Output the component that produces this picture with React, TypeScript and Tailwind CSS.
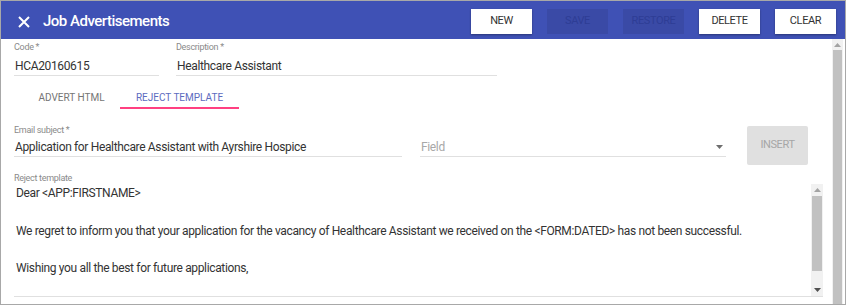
import React from "react";

function HeaderButton({ label, disabled }: { label: string; disabled?: boolean }) {
  return disabled ? (
    <div className="flex h-[25px] w-[61px] items-center justify-center bg-[#3a4aa6] text-[11px] tracking-[-0.4px] text-[#2e3d95]">
      {label}
    </div>
  ) : (
    <div className="flex h-[25px] w-[61px] items-center justify-center bg-white text-[11px] tracking-[-0.4px] text-[#333] shadow-[0_1px_2px_rgba(0,0,0,0.35)]">
      {label}
    </div>
  );
}

function ScrollArrow({ up }: { up?: boolean }) {
  return (
    <svg width="7" height="4" viewBox="0 0 7 4" className="block">
      {up ? <polygon points="0,4 7,4 3.5,0" fill="#a3a3a3" /> : <polygon points="0,0 7,0 3.5,4" fill="#505050" />}
    </svg>
  );
}

const label = "text-[9px] leading-[11px] tracking-[-0.3px] text-[#8a8a8a]";
const value = "text-[12px] leading-[18px] tracking-[-0.35px] text-[#333]";

export default function App() {
  return (
    <div
      className="flex h-[305px] w-[846px] flex-col overflow-hidden border border-[#a8a8a8] bg-white"
      style={{ fontFamily: "Roboto, 'Liberation Sans', sans-serif" }}
    >
      {/* Header */}
      <div className="flex h-[38px] shrink-0 items-start bg-[#3f51b5] pl-[16px] pr-[9px]">
        <svg width="12" height="12" viewBox="0 0 12 12" className="mt-[15px] ml-[1px]">
          <path d="M1 1 L11 11 M11 1 L1 11" stroke="white" strokeWidth="2" />
        </svg>
        <div className="ml-[13px] mt-[10px] text-[15px] font-medium leading-[20px] tracking-[-0.5px] text-white">
          Job Advertisements
        </div>
        <div className="ml-auto mt-[8px] flex gap-[15px]">
          <HeaderButton label="NEW" />
          <HeaderButton label="SAVE" disabled />
          <HeaderButton label="RESTORE" disabled />
          <HeaderButton label="DELETE" />
          <HeaderButton label="CLEAR" />
        </div>
      </div>

      {/* Body */}
      <div className="flex min-h-0 flex-1">
        <div className="flex min-w-0 flex-1 flex-col pl-[13px] pr-[9px]">
          {/* Code / Description */}
          <div className="flex gap-[17px] pt-[3px]">
            <div className="w-[145px] border-b border-[#e0e0e0]">
              <div className={label}>Code *</div>
              <div className={`mt-[4px] pl-[1px] ${value}`}>HCA20160615</div>
            </div>
            <div className="w-[321px] border-b border-[#e0e0e0]">
              <div className={label}>Description *</div>
              <div className={`mt-[4px] pl-[1px] ${value}`}>Healthcare Assistant</div>
            </div>
          </div>

          {/* Tabs */}
          <div className="ml-[9px] mt-[12px] flex">
            <div className="flex h-[21px] w-[97px] items-start justify-center pt-[3px] text-[10px] leading-[13px] text-[#757575]">
              ADVERT HTML
            </div>
            <div className="flex h-[21px] w-[119px] items-start justify-center border-b-2 border-[#ff4081] pt-[3px] text-[10px] leading-[13px] text-[#5c6bc0]">
              REJECT TEMPLATE
            </div>
          </div>

          {/* Email subject row */}
          <div className="mt-[16px] flex h-[33px] items-start">
            <div className="w-[388px] border-b border-[#e0e0e0]">
              <div className={label}>Email subject *</div>
              <div className={`mt-[2px] pl-[1px] ${value}`}>
                Application for Healthcare Assistant with Ayrshire Hospice
              </div>
            </div>
            <div className="ml-[18px] mt-[13px] flex w-[306px] items-center border-b border-[#e0e0e0]">
              <div className="pl-px text-[12px] leading-[18px] tracking-[-0.35px] text-[#a8a8a8]">Field</div>
              <svg width="7" height="4" viewBox="0 0 7 4" className="ml-auto mr-[3px]">
                <polygon points="0,0 7,0 3.5,4" fill="#6e6e6e" />
              </svg>
            </div>
            <div className="ml-[21px] mt-[1px] flex h-[39px] w-[61px] shrink-0 items-center justify-center rounded-[2px] bg-[#e0e0e0] text-[11px] tracking-[-0.4px] text-[#a6a6a6]">
              INSERT
            </div>
          </div>

          {/* Reject template */}
          <div className={`mt-[15px] ${label}`}>Reject template</div>
          <div className="flex h-[113px] border-b border-[#e0e0e0]">
            <div className="flex-1 pl-[2px] text-[12px] leading-[18.75px] tracking-[-0.35px] text-[#333]">
              <div>Dear &lt;APP:FIRSTNAME&gt;</div>
              <div>&nbsp;</div>
              <div>
                We regret to inform you that your application for the vacancy of Healthcare Assistant we received on the
                &lt;FORM:DATED&gt; has not been successful.
              </div>
              <div>&nbsp;</div>
              <div>Wishing you all the best for future applications,</div>
            </div>
            {/* inner scrollbar */}
            <div className="flex w-[12px] flex-col items-center bg-[#f1f1f1]">
              <div className="flex h-[12px] items-center">
                <ScrollArrow up />
              </div>
              <div className="h-[75px] w-[10px] bg-[#c1c1c1]" />
              <div className="flex flex-1 items-end pb-[4px]">
                <ScrollArrow />
              </div>
            </div>
          </div>
        </div>

        {/* page scrollbar */}
        <div className="mr-[2px] flex w-[11px] shrink-0 flex-col items-center bg-[#f1f1f1]">
          <div className="flex h-[11px] items-center">
            <ScrollArrow up />
          </div>
          <div className="w-[9px] flex-1 bg-[#c1c1c1]" />
        </div>
      </div>
    </div>
  );
}
